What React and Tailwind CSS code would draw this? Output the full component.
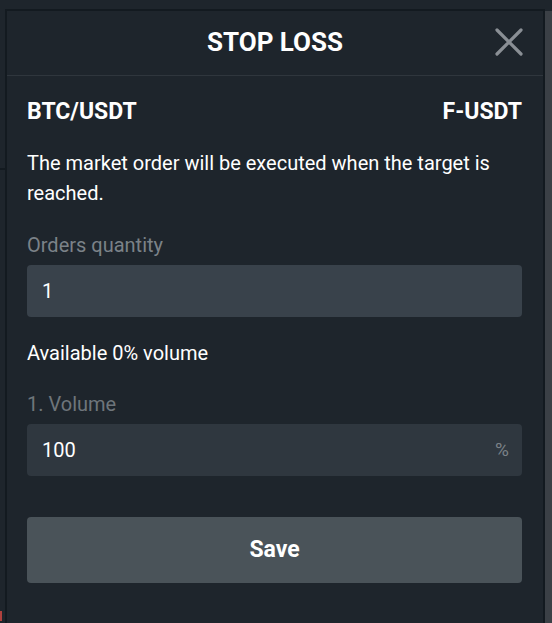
import React from 'react';

function CloseIcon() {
  return (
    <svg width="30" height="30" viewBox="0 0 30 30" fill="none">
      <path d="M3 3L27 27M27 3L3 27" stroke="#8a8f95" strokeWidth="3.2" strokeLinecap="round" />
    </svg>
  );
}

export default function App() {
  return (
    <div
      className="w-[552px] h-[623px] overflow-hidden bg-[#1e252c] flex flex-col"
      style={{ fontFamily: 'Roboto, "Liberation Sans", sans-serif' }}
    >
      {/* strip of the page behind */}
      <div className="h-[9px] shrink-0" />

      <div className="flex flex-1 min-h-0">
        {/* left edge of the chart behind */}
        <div className="w-[5px] shrink-0 flex flex-col">
          <div className="h-[159px]" />
          <div className="h-[2px] bg-[#131a20]" />
          <div className="flex-1" />
          <div className="h-[10px] w-[2px] bg-[#b0413e] mb-[2px]" />
        </div>

        {/* Modal */}
        <div className="w-[540px] shrink-0 border-l-2 border-t-2 border-r-2 border-[#131a20] bg-[#1e252c] flex flex-col">
          {/* Header */}
          <div className="relative h-[65px] shrink-0 border-b border-[#2f363d] flex items-center justify-center">
            <h2 className="text-[26px] font-bold text-white -mt-[2px]">STOP LOSS</h2>
            <button className="absolute right-[19px] top-[16px]">
              <CloseIcon />
            </button>
          </div>

          {/* Body */}
          <div className="pl-[20px] pr-[21px] pt-[22px] flex flex-col">
            <div className="flex justify-between items-center text-[23px] leading-[28px] font-bold text-white">
              <span>BTC/USDT</span>
              <span>F-USDT</span>
            </div>

            <p className="mt-[22px] text-[20px] leading-[30px] text-white">
              The market order will be executed when the target is reached.
            </p>

            <label className="mt-[25px] text-[20px] leading-[24px] text-[#7b8288]">Orders quantity</label>
            <div className="mt-[8px] h-[52px] rounded-[4px] bg-[#39424b] flex items-center px-[15px]">
              <span className="text-[20px] text-white">1</span>
            </div>

            <div className="mt-[24px] text-[20px] leading-[24px] text-white">Available 0% volume</div>

            <label className="mt-[27px] text-[20px] leading-[24px] text-[#6e757b]">1. Volume</label>
            <div className="mt-[8px] h-[52px] rounded-[4px] bg-[#2f373f] flex items-center justify-between pl-[15px] pr-[13px]">
              <span className="text-[20px] text-white">100</span>
              <span className="text-[19px] text-[#7b8288]">%</span>
            </div>

            <button className="mt-[41px] h-[66px] rounded-[4px] bg-[#4a5359] text-[23px] font-bold text-white">
              Save
            </button>
          </div>
        </div>

        {/* scrollbar of the page behind */}
        <div className="w-[7px] shrink-0 mt-[2px] bg-[#3b4046]" />
      </div>
    </div>
  );
}
